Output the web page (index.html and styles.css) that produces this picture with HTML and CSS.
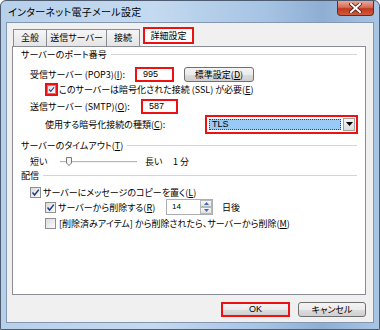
FILE: index.html
```html
<!DOCTYPE html>
<html lang="ja">
<head>
    <meta charset="UTF-8">
    <title>インターネット電子メール設定</title>
    <link rel="stylesheet" href="styles.css">
</head>
<body>
    <div class="window">
        <div class="titlebar">
            <span class="title">インターネット電子メール設定</span>
            <div class="close">
                <svg width="13" height="10" viewBox="0 0 13 10">
                    <path d="M2 1 L11 9 M11 1 L2 9" stroke="#5a1a10" stroke-width="3.6" stroke-linecap="square"/>
                    <path d="M2 1 L11 9 M11 1 L2 9" stroke="#ffffff" stroke-width="2" stroke-linecap="square"/>
                </svg>
            </div>
        </div>

        <div class="client">
            <div class="tabs">
                <div class="tab tab-first">全般</div>
                <div class="tab w60">送信サーバー</div>
                <div class="tab w33">接続</div>
                <div class="tab tab-active">詳細設定</div>
            </div>

            <div class="panel">
                <div class="group">サーバーのポート番号</div>

                <div class="row row-pop">
                    <span class="label w105">受信サーバー (POP3)(<u>I</u>):</span>
                    <span class="field mark w39">995</span>
                    <span class="btn btn-default">標準設定(<u>D</u>)</span>
                </div>

                <div class="row row-ssl">
                    <span class="mark-box"><span class="check small"><svg width="9" height="9" viewBox="0 0 9 9"><path d="M1.5 4.5 L3.6 7 L7.8 1.6" fill="none" stroke="#1f3f86" stroke-width="1.5"/></svg></span></span>
                    <span class="text">このサーバーは暗号化された接続 (SSL) が必要(<u>E</u>)</span>
                </div>

                <div class="row row-smtp">
                    <span class="label w111">送信サーバー (SMTP)(<u>O</u>):</span>
                    <span class="field mark w37">587</span>
                </div>

                <div class="row row-type">
                    <span class="label w160">使用する暗号化接続の種類(<u>C</u>):</span>
                    <div class="select mark">
                        <span class="select-value">TLS</span>
                        <span class="select-arrow">
                            <svg width="7" height="4" viewBox="0 0 7 4"><path d="M0 0 H7 L3.5 4 Z" fill="#000"/></svg>
                        </span>
                    </div>
                </div>

                <div class="group group-timeout">サーバーのタイムアウト(<u>T</u>)</div>

                <div class="row row-slider">
                    <span class="short">短い</span>
                    <div class="slider">
                        <div class="track"></div>
                        <svg class="thumb" width="6" height="9" viewBox="0 0 6 9">
                            <path d="M0.5 0.5 H5.5 V6 L3 8.5 L0.5 6 Z" fill="#f4f4f4" stroke="#7a7a7a"/>
                        </svg>
                    </div>
                    <span class="long">長い</span>
                    <span class="minutes">1 分</span>
                </div>

                <div class="group group-delivery">配信</div>

                <div class="row row-copy">
                    <span class="check"><svg width="9" height="9" viewBox="0 0 9 9"><path d="M1.5 4.5 L3.6 7 L7.8 1.6" fill="none" stroke="#1f3f86" stroke-width="1.5"/></svg></span>
                    <span class="text">サーバーにメッセージのコピーを置く(<u>L</u>)</span>
                </div>

                <div class="row row-delete">
                    <span class="check"><svg width="9" height="9" viewBox="0 0 9 9"><path d="M1.5 4.5 L3.6 7 L7.8 1.6" fill="none" stroke="#1f3f86" stroke-width="1.5"/></svg></span>
                    <span class="text w108">サーバーから削除する(<u>R</u>)</span>
                    <div class="spinner">
                        <span class="spin-value">14</span>
                        <span class="spin-buttons">
                            <span class="spin-btn"><svg width="5" height="3" viewBox="0 0 5 3"><path d="M0 3 L2.5 0 L5 3 Z" fill="#3d6bb5"/></svg></span>
                            <span class="spin-btn"><svg width="5" height="3" viewBox="0 0 5 3"><path d="M0 0 L2.5 3 L5 0 Z" fill="#3d6bb5"/></svg></span>
                        </span>
                    </div>
                    <span class="days">日後</span>
                </div>

                <div class="row row-items">
                    <span class="check"></span>
                    <span class="text">[削除済みアイテム] から削除されたら、サーバーから削除(<u>M</u>)</span>
                </div>
            </div>

            <div class="footer">
                <span class="btn btn-ok">OK</span>
                <span class="btn btn-cancel">キャンセル</span>
            </div>
        </div>
    </div>
</body>
</html>
```

FILE: styles.css
```css
body {
    margin: 0;
    font-family: "Noto Sans CJK JP", "Noto Sans", sans-serif;
    font-size: 9px;
    color: #000;
    background: #ffffff;
}

u {
    text-decoration: underline;
    text-underline-offset: 1px;
}

.window {
    width: 380px;
    height: 330px;
    box-sizing: border-box;
    border: 1px solid #4d5c70;
    border-radius: 6px 6px 0 0;
    background: linear-gradient(to right, #b7d0ea 0%, #c4daf0 40%, #a6c3e3 70%, #8eaed3 85%, #a9c5e4 100%);
    display: flex;
    flex-direction: column;
    overflow: hidden;
}

/* title bar */
.titlebar {
    height: 21px;
    display: flex;
    align-items: flex-start;
    padding: 0 5px 0 7px;
    flex: none;
}

.title {
    font-size: 10px;
    line-height: 21px;
    font-feature-settings: "palt";
    letter-spacing: 0.3px;
}

.close {
    margin-left: auto;
    width: 37px;
    height: 15px;
    box-sizing: border-box;
    border: 1px solid #6b2a1e;
    border-top: none;
    border-radius: 0 0 4px 4px;
    background: linear-gradient(to bottom, #e9a99a 0%, #d56c56 45%, #c0391f 55%, #cf5b3d 100%);
    display: flex;
    justify-content: center;
    align-items: center;
}

/* client area */
.client {
    flex: 1;
    margin: 0 5px 6px 5px;
    border: 1px solid #8397b0;
    background: #f0f0f0;
    padding: 4px 7px 0 5px;
    display: flex;
    flex-direction: column;
}

.tabs {
    height: 19px;
    display: flex;
    align-items: flex-end;
    flex: none;
}

.tab {
    height: 17px;
    box-sizing: border-box;
    border: 1px solid #898c95;
    border-bottom: none;
    background: linear-gradient(to bottom, #f6f6f6, #e4e4e4);
    line-height: 16px;
    text-align: center;
    font-feature-settings: "palt";
}

.tab + .tab {
    border-left: none;
}

.tab-first {
    width: 34px;
    margin-left: 1px;
}

.w60 { width: 60px; }
.w33 { width: 33px; }

.tab.tab-active {
    width: 51px;
    height: 17px;
    margin-left: 3px;
    margin-bottom: 2px;
    border: 2px solid #ee1111;
    background: #ffffff;
    line-height: 13px;
    box-shadow: 0 2px 0 #ffffff;
}

/* main panel */
.panel {
    height: 249px;
    box-sizing: border-box;
    border: 1px solid #898c95;
    background: #ffffff;
    flex: none;
}

.group {
    height: 14px;
    display: flex;
    align-items: center;
    padding-left: 8px;
    font-feature-settings: "palt";
}

.group::after {
    content: "";
    flex: 1;
    height: 1px;
    background: #d5d5d5;
    margin: 0 8px 0 4px;
}

.group-timeout { margin-top: 4px; }
.group-delivery { margin-top: 0; }

.row {
    display: flex;
    align-items: center;
    font-feature-settings: "palt";
}

.label {
    flex: none;
    white-space: nowrap;
}

.w105 { width: 105px; }
.w111 { width: 111px; }
.w160 { width: 160px; }
.w108 { width: 108px; }
.w39 { width: 39px; }
.w37 { width: 37px; }

.row-pop { margin-top: 5px; height: 16px; padding-left: 17px; }
.row-ssl { height: 15px; padding-left: 32px; }
.row-smtp { margin-top: 2px; height: 15px; padding-left: 17px; }
.row-type { height: 20px; padding-left: 32px; }
.row-slider { margin-top: 3px; height: 13px; padding-left: 17px; }
.row-copy { margin-top: 3px; height: 14px; padding-left: 17px; }
.row-delete { height: 16px; padding-left: 32px; }
.row-items { margin-top: 1px; height: 14px; padding-left: 32px; }

.field {
    height: 15px;
    box-sizing: border-box;
    background: #ffffff;
    padding-left: 6px;
    line-height: 11px;
    font-family: "Liberation Sans", sans-serif;
    font-size: 9px;
}

.mark {
    border: 2px solid #ee1111;
}

.btn {
    height: 15px;
    box-sizing: border-box;
    border: 1px solid #707070;
    border-radius: 3px;
    background: linear-gradient(to bottom, #f3f3f3 0%, #ebebeb 50%, #dddddd 51%, #cfcfcf 100%);
    text-align: center;
    line-height: 13px;
    font-feature-settings: "palt";
}

.btn-default {
    width: 70px;
    margin-left: 10px;
}

/* checkboxes */
.check {
    width: 11px;
    height: 11px;
    box-sizing: border-box;
    border: 1px solid #8e8f8f;
    background: linear-gradient(135deg, #dcdcdc, #fbfbfb);
    display: flex;
    justify-content: center;
    align-items: center;
    flex: none;
}

.check.small {
    width: 9px;
    height: 9px;
}

.mark-box {
    width: 13px;
    height: 13px;
    box-sizing: border-box;
    border: 2px solid #ee1111;
    display: flex;
    flex: none;
}

.row-ssl .text { margin-left: 1px; }
.row-copy .text { margin-left: 2px; }
.row-delete .text { margin-left: 2px; }
.row-items .text { margin-left: 3px; }

.text {
    white-space: nowrap;
}

/* dropdown */
.select {
    width: 153px;
    height: 19px;
    box-sizing: border-box;
    background: #ffffff;
    padding: 1px;
    display: flex;
}

.select-value {
    flex: 1;
    background: #99c9f5;
    outline: 1px dotted #444;
    outline-offset: -1px;
    margin: 1px 2px 1px 1px;
    padding-left: 3px;
    line-height: 11px;
    font-family: "Liberation Sans", sans-serif;
    font-size: 9px;
}

.select-arrow {
    width: 12px;
    box-sizing: border-box;
    border: 1px solid #a0a0a0;
    background: linear-gradient(to bottom, #f5f5f5, #dcdcdc);
    display: flex;
    justify-content: center;
    align-items: center;
}

/* slider */
.short { width: 30px; }

.slider {
    position: relative;
    width: 77px;
    height: 13px;
}

.track {
    position: absolute;
    left: 0;
    right: 0;
    top: 6px;
    height: 1px;
    background: #b5b5b5;
    border-bottom: 1px solid #f3f3f3;
}

.thumb {
    position: absolute;
    left: 6px;
    top: 2px;
}

.long {
    margin-left: 8px;
    width: 28px;
}

/* spinner */
.spinner {
    width: 47px;
    height: 16px;
    box-sizing: border-box;
    border: 1px solid #abadb3;
    background: #ffffff;
    display: flex;
}

.spin-value {
    flex: 1;
    padding-left: 5px;
    line-height: 14px;
    font-family: "Liberation Sans", sans-serif;
    font-size: 8px;
}

.spin-buttons {
    width: 12px;
    display: flex;
    flex-direction: column;
}

.spin-btn {
    flex: 1;
    border: 1px solid #b8b8b8;
    background: linear-gradient(to bottom, #f8f8f8, #e2e2e2);
    display: flex;
    justify-content: center;
    align-items: center;
}

.days {
    margin-left: 9px;
}

/* bottom buttons */
.footer {
    flex: 1;
    display: flex;
    justify-content: flex-end;
    align-items: flex-start;
    padding-top: 7px;
    gap: 8px;
}

.btn-ok {
    width: 69px;
    border: 2px solid #ee1111;
    border-radius: 0;
    line-height: 11px;
    font-family: "Liberation Sans", sans-serif;
}

.btn-cancel {
    width: 68px;
}
```
